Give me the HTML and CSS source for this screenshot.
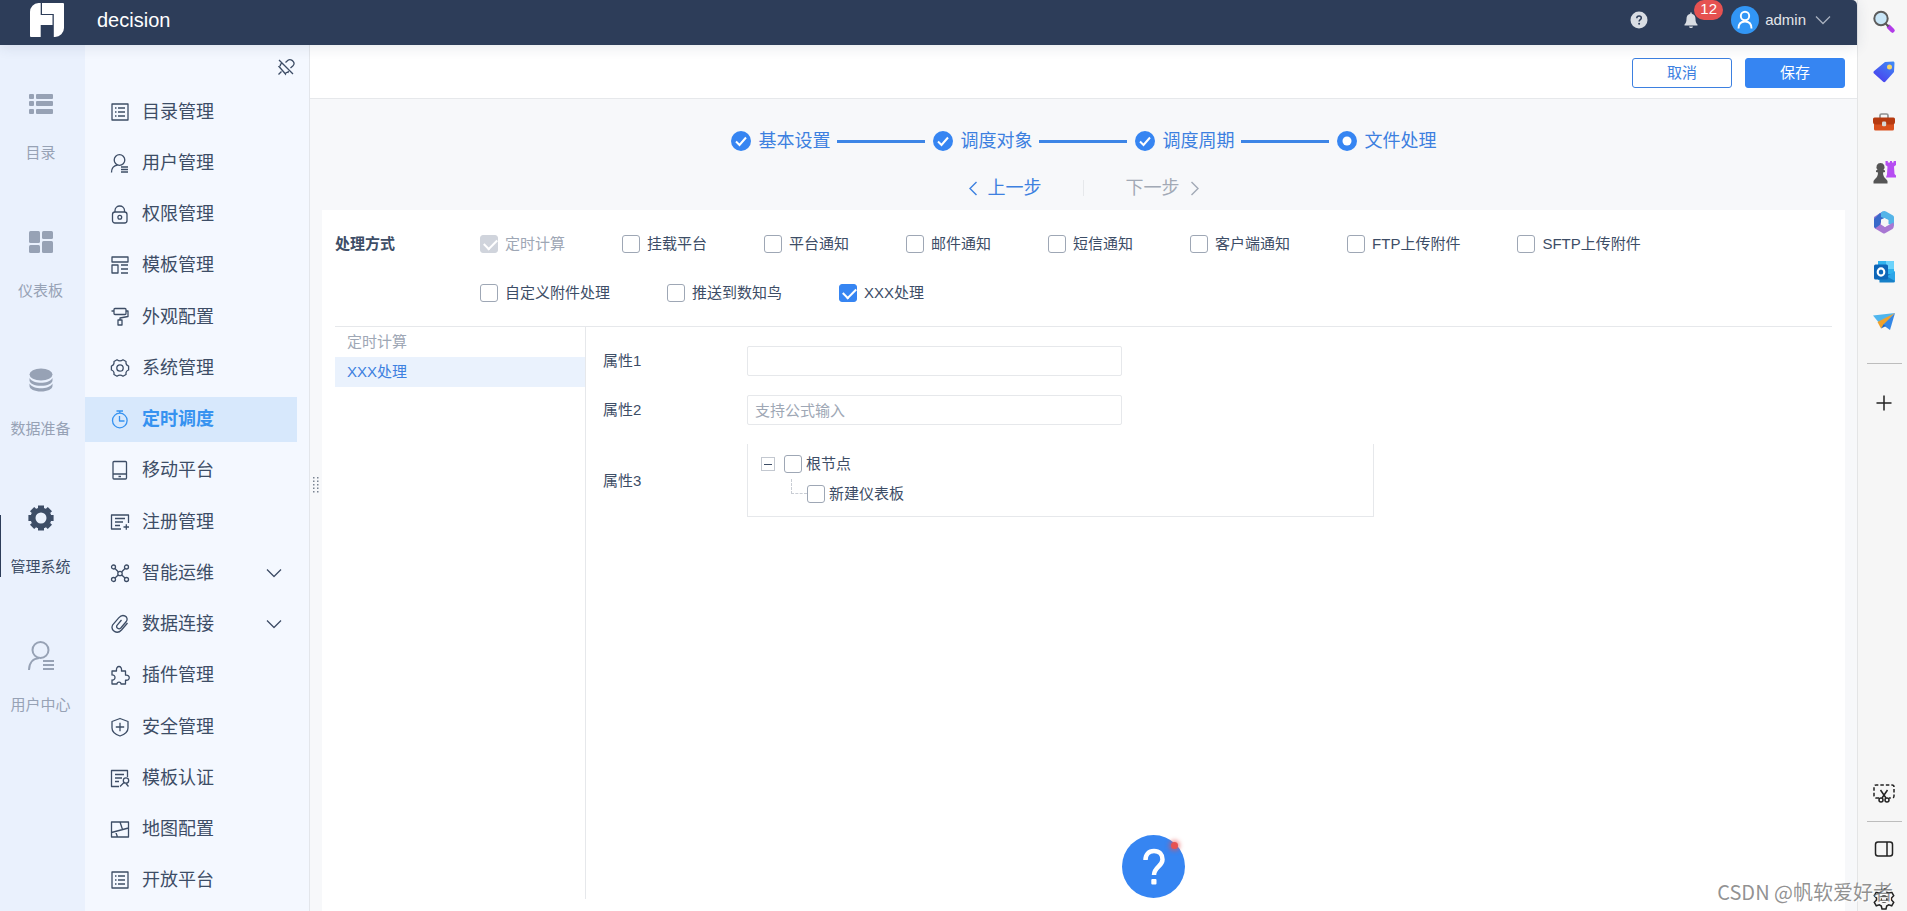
FILE: index.html
```html
<!DOCTYPE html>
<html lang="zh-CN">
<head>
<meta charset="utf-8">
<title>decision</title>
<link rel="stylesheet" href="styles.css">
</head>
<body>
<div class="app">
  <header class="topbar">
    <svg class="logo" viewBox="0 0 36 36"><path fill="#fff" d="M10.500 1H12.700V13H24.500V23H12.700V35H3a1 1 0 0 1-1-1V10a9 9 0 0 1 8.500-9z"/><path fill="#fff" d="M14 1h21a1 1 0 0 1 1 1v24a9 9 0 0 1-9 9h-1.200V12H14z"/></svg>
    <h1 class="brand">decision</h1>
    <div class="tools">
      <button class="tool" aria-label="帮助"><svg width="18" height="18" viewBox="0 0 18 18"><circle cx="9" cy="9" r="8.500" fill="#d9dde3"/><path d="M6.800 7.200c0-1.400 1-2.200 2.300-2.200s2.200.8 2.200 2c0 1.600-2.200 1.700-2.200 3.400" fill="none" stroke="#2d3d59" stroke-width="1.500"/><circle cx="9.100" cy="12.800" r="1" fill="#2d3d59"/></svg></button>
      <button class="tool bell" aria-label="消息"><svg width="16" height="18" viewBox="0 0 16 18"><path fill="#d9dde3" d="M7.300 1.500h1.400v1.300c2.600.5 3.800 2.500 3.800 5 0 3.200.6 4.400 2 5.700v1H1.500v-1c1.400-1.300 2-2.500 2-5.700 0-2.500 1.200-4.500 3.800-5zM6 15.500h4c-.2 1-1 1.500-2 1.500s-1.800-.5-2-1.500z"/></svg><span class="badge">12</span></button>
      <button class="user"><svg width="28" height="28" viewBox="0 0 28 28"><circle cx="14" cy="14" r="14" fill="#3296f5"/><g fill="none" stroke="#fff" stroke-width="1.900"><circle cx="14" cy="10" r="4.200"/><path d="M7.500 22.500c0-4.500 2.500-7 6.500-7s6.500 2.500 6.500 7"/></g></svg><span>admin</span><svg class="line" width="16" height="10" viewBox="0 0 16 10"><path d="M1 1.500l7 7 7-7"/></svg></button>
    </div>
  </header>
  <div class="workspace">
    <nav class="rail">
      <a class="rail-item" href="#"><svg viewBox="0 0 26 30" fill="#97a2b5"><rect x="1" y="5" width="5" height="5" rx="1"/><rect x="8" y="5" width="17" height="5" rx="1"/><rect x="1" y="12" width="5" height="5" rx="1"/><rect x="8" y="12" width="17" height="5" rx="1"/><rect x="1" y="20" width="5" height="5" rx="1"/><rect x="8" y="20" width="17" height="5" rx="1"/></svg><span>目录</span></a>
      <a class="rail-item" href="#"><svg viewBox="0 0 26 30" fill="#97a2b5"><rect x="1" y="4" width="11" height="12" rx="1.500"/><rect x="14" y="4" width="11" height="8" rx="1.500"/><rect x="1" y="18" width="11" height="8" rx="1.500"/><rect x="14" y="14" width="11" height="12" rx="1.500"/></svg><span>仪表板</span></a>
      <a class="rail-item" href="#"><svg viewBox="0 0 26 30" fill="#97a2b5"><ellipse cx="13" cy="9.500" rx="11.500" ry="6"/><path d="M1.500 13c2 3.500 7 4.700 11.500 4.700S22.500 16.500 24.500 13v2.500c0 3-5 5.300-11.500 5.300S1.500 18.500 1.500 15.500z"/><path d="M1.500 18.500c2 3.500 7 4.700 11.500 4.700s9.500-1.200 11.500-4.700v2.500c0 3-5 5.500-11.500 5.500S1.500 24 1.500 21z"/></svg><span>数据准备</span></a>
      <a class="rail-item current" href="#"><svg viewBox="0 0 26 30"><circle cx="13" cy="15" r="8" fill="none" stroke="#3d4d66" stroke-width="5"/><g stroke="#3d4d66" stroke-width="6"><path d="M13 2.400v3M13 24.600v3M.4 15h3M22.600 15h3M4.100 6.100l2.100 2.100M19.800 21.800l2.100 2.100M21.900 6.100l-2.100 2.100M6.200 21.800l-2.100 2.100"/></g></svg><span>管理系统</span></a>
      <a class="rail-item" href="#"><svg viewBox="0 0 26 30" fill="none" stroke="#97a2b5" stroke-width="2"><circle cx="12.500" cy="9" r="8"/><path d="M1 29c0-7 4-11.500 10-12M15 20h11M15 24h11M15 28h11"/></svg><span>用户中心</span></a>
    </nav>
    <aside class="side">
      <div class="side-head"><button class="tool line" aria-label="取消固定"><svg width="18" height="18" viewBox="0 0 18 18"><path d="M2 2l14 14M1.500 16.500l3-3M8.500 4.500l2.500-2.200c2-1.600 4.500.2 5.500 1.500 1 1.600.5 3-.5 4L13.500 10M5 5.500l-1.500.6c.3 1.200-.5 2.100-1.500 2.400l6.500 7.500c.3-1.300 1.200-2 2.500-1.500l.5-1.500"/></svg></button></div>
      <ul class="menu">
        <li><a href="#"><svg viewBox="0 0 20 20"><path d="M2 2h16v16H2zM8 6h7M8 10h7M8 14h7M5 6h1.500M5 10h1.500M5 14h1.500"/></svg>目录管理</a></li>
        <li><a href="#"><svg viewBox="0 0 20 20"><circle cx="9.500" cy="7" r="5.300"/><path d="M1.500 19.500c0-4.500 2.500-7 6-7.400M11 14h7M11 16.500h7M11 19h7"/></svg>用户管理</a></li>
        <li><a href="#"><svg viewBox="0 0 20 20"><rect x="2.500" y="8" width="14.500" height="11" rx="2.500"/><path d="M5 8V6.500c0-6 9.500-6 9.500 0V8"/><circle cx="9.800" cy="13.300" r="1.900"/></svg>权限管理</a></li>
        <li><a href="#"><svg viewBox="0 0 20 20"><path d="M2 2h16v5H2zM2 10h6v8H2zM11 10h7M11 14h7M11 18h7"/></svg>模板管理</a></li>
        <li><a href="#"><svg viewBox="0 0 20 20"><path d="M5 1.500h10q1 0 1 1v4q0 1-1 1H5q-1 0-1-1v-4q0-1 1-1zM4 4H1.500M16 4h2v5.500l-8 1.500v2M8 13h4v5H8z"/></svg>外观配置</a></li>
        <li><a href="#"><svg viewBox="0 0 20 20"><path d="M7 1.800Q10 4 13 1.800L16 3.500Q15.500 7 18.600 8V12Q15.500 13 16 16.500L13 18.200Q10 16 7 18.200L4 16.500Q4.500 13 1.400 12V8Q4.500 7 4 3.500Z"/><circle cx="10" cy="10" r="3.200"/></svg>系统管理</a></li>
        <li><a class="active" href="#"><svg viewBox="0 0 20 20"><circle cx="9.800" cy="11.500" r="7.300"/><path d="M9.500 7v5h5M6.500 2h6.500M9.800 2v2"/></svg>定时调度</a></li>
        <li><a href="#"><svg viewBox="0 0 20 20"><rect x="3" y="1.500" width="13.500" height="17.500" rx="1"/><path d="M3 14h13.500M8.500 16.500h2.500"/></svg>移动平台</a></li>
        <li><a href="#"><svg viewBox="0 0 20 20"><path d="M18.500 11V3h-17v14H11M5 6.500h10M5 10h8M5 13.500h5M13.500 15H19M16.300 12.200v5.600"/></svg>注册管理</a></li>
        <li><a href="#"><svg viewBox="0 0 20 20"><circle cx="3.500" cy="4" r="2"/><circle cx="16.500" cy="4" r="2"/><circle cx="3.500" cy="16.500" r="2"/><circle cx="16.500" cy="16.500" r="2"/><circle cx="10" cy="10.500" r="2.200"/><path d="M5 5.500l3.200 3.300M15 5.500l-3.200 3.300M5 15l3.200-3M15 15l-3.200-3"/></svg>智能运维<svg class="chev" viewBox="0 0 16 10"><path d="M1 1.500l7 7 7-7"/></svg></a></li>
        <li><a href="#"><svg viewBox="0 0 20 20"><path d="M17.500 9l-6 7c-4.500 5-11.500.5-8.800-5.200l6-7C13-1 19.300 3 16.300 7.500l-5.500 6.500c-2 2-5.100-.2-3.800-2.700l4.500-5.300"/></svg>数据连接<svg class="chev" viewBox="0 0 16 10"><path d="M1 1.500l7 7 7-7"/></svg></a></li>
        <li><a href="#"><svg viewBox="0 0 20 20"><path d="M2 6h4.500c-1-6 6-6 5 0h4v4.200c5-.8 5 5.800 0 5V19H11c0-2.500-4-2.500-4 0H2v-4c4 .5 4-5.500 0-5z"/></svg>插件管理</a></li>
        <li><a href="#"><svg viewBox="0 0 20 20"><path d="M10 1.500l8 3V11c0 4-3.500 6.500-8 8-4.500-1.500-8-4-8-8V4.500zM5.800 10h8.400M10 5.800v8.400"/></svg>安全管理</a></li>
        <li><a href="#"><svg viewBox="0 0 20 20"><path d="M17.500 9V2.500h-16v16H9M5 6.500h9M5 10h7M5 13.500h4"/><circle cx="16" cy="12.500" r="2.700"/><path d="M14 14.500L10 18.500M16 15.500l2.500 3"/></svg>模板认证</a></li>
        <li><a href="#"><svg viewBox="0 0 20 20"><path d="M1.500 3h17v15h-17zM1.500 13.500l17-4.500M10 3l2.500 7.500M5.500 12.500l2 5.500"/></svg>地图配置</a></li>
        <li><a href="#"><svg viewBox="0 0 20 20"><path d="M2 2h16v16H2zM8 6h7M8 10h7M8 14h7M5 6h1.500M5 10h1.500M5 14h1.500"/></svg>开放平台</a></li>
      </ul>
    </aside>
    <main class="main">
      <svg class="grip" width="7" height="17" viewBox="0 0 7 17" fill="#7b8492"><path d="M1 1h1.500v1.500H1zM5 1h1.500v1.500H5zM1 4.500h1.500V6H1zM5 4.500h1.500V6H5zM1 8h1.500v1.500H1zM5 8h1.500v1.500H5zM1 11.500h1.500V13H1zM5 11.500h1.500V13H5zM1 15h1.500v1.500H1zM5 15h1.500v1.500H5z"/></svg>
      <div class="actions"><button class="btn">取消</button><button class="btn primary">保存</button></div>
      <ol class="steps">
        <li><svg viewBox="0 0 20 20"><circle cx="10" cy="10" r="10"/><path d="M5 10.500l3.500 3.500L15 6.500"/></svg>基本设置</li>
        <li><svg viewBox="0 0 20 20"><circle cx="10" cy="10" r="10"/><path d="M5 10.500l3.500 3.500L15 6.500"/></svg>调度对象</li>
        <li><svg viewBox="0 0 20 20"><circle cx="10" cy="10" r="10"/><path d="M5 10.500l3.500 3.500L15 6.500"/></svg>调度周期</li>
        <li><svg viewBox="0 0 20 20"><circle cx="10" cy="10" r="10"/><circle class="hole" cx="10" cy="10" r="4.500"/></svg>文件处理</li>
      </ol>
      <div class="pager">
        <button class="page prev"><svg width="10" height="15" viewBox="0 0 10 15"><path d="M8.500 1L2 7.500 8.500 14"/></svg>上一步</button>
        <button class="page next" disabled>下一步<svg width="10" height="15" viewBox="0 0 10 15"><path d="M1.500 1L8 7.500 1.500 14"/></svg></button>
      </div>
      <section class="card">
        <fieldset class="methods">
          <legend>处理方式</legend>
          <div class="options">
            <label><input type="checkbox" checked disabled>定时计算</label>
            <label><input type="checkbox">挂载平台</label>
            <label><input type="checkbox">平台通知</label>
            <label><input type="checkbox">邮件通知</label>
            <label><input type="checkbox">短信通知</label>
            <label><input type="checkbox">客户端通知</label>
            <label><input type="checkbox">FTP上传附件</label>
            <label><input type="checkbox">SFTP上传附件</label>
            <label><input type="checkbox">自定义附件处理</label>
            <label><input type="checkbox">推送到数知鸟</label>
            <label><input type="checkbox" checked>XXX处理</label>
          </div>
        </fieldset>
        <div class="detail">
          <div class="tabs">
            <button class="tab" disabled>定时计算</button>
            <button class="tab selected">XXX处理</button>
          </div>
          <form class="form">
            <label for="p1">属性1</label><input class="field" id="p1" type="text">
            <label for="p2">属性2</label><input class="field" id="p2" type="text" placeholder="支持公式输入">
            <span id="p3">属性3</span>
            <div class="tree" role="group" aria-labelledby="p3">
              <div class="node"><button type="button" class="toggle" aria-label="收起"></button><label><input type="checkbox">根节点</label></div>
              <div class="node child"><span class="branch"></span><label><input type="checkbox">新建仪表板</label></div>
            </div>
          </form>
        </div>
      </section>
    </main>
  </div>
  <button class="help" aria-label="帮助中心"><svg viewBox="0 0 63 63"><circle cx="31.500" cy="31.500" r="31.500" fill="#3685f2"/><path d="M23.500 25c0-5.500 3-9 8.500-9s8.500 3.500 8.500 8.500c0 7-8.500 7.500-8.500 15.500" fill="none" stroke="#fff" stroke-width="4.500"/><rect x="29.300" y="44" width="5.200" height="5.500" rx="1" fill="#fff"/></svg></button>
</div>
<aside class="dock">
  <svg viewBox="0 0 24 24"><path d="M17 17l3.500 3.500" stroke="#b23be8" stroke-width="4.500" stroke-linecap="round"/><path d="M13.500 13.500l3 3" stroke="#555" stroke-width="2"/><circle cx="9" cy="8.500" r="6.700" fill="#c8e6f8" stroke="#5c5c5c" stroke-width="2"/></svg>
  <svg viewBox="0 0 24 24"><defs><linearGradient id="tag" x1="1" y1="0" x2=".3" y2="1"><stop offset="0" stop-color="#3f8df5"/><stop offset="1" stop-color="#4a41ee"/></linearGradient></defs><path fill="url(#tag)" d="M13 2l8-.5c1 0 1.500.6 1.500 1.500l-.5 9-8.500 9.500c-.8.9-1.800.9-2.600.1L2 13.500c-.8-.8-.7-1.700.1-2.500z"/><circle cx="17.500" cy="7" r="2.500" fill="#f4d66a"/></svg>
  <svg viewBox="0 0 24 24"><path d="M8 8V5.500Q8 4 9.500 4h5Q16 4 16 5.500V8" fill="none" stroke="#8f8f8f" stroke-width="1.700"/><path fill="#d9501e" d="M2 14h20v5q0 1.500-1.500 1.500h-17Q2 20.500 2 19z"/><path fill="#b63a10" d="M2.500 7.500h19q1.500 0 1.500 1.500v3q0 2.500-3 2.500H4q-3 0-3-2.500V9q0-1.500 1.500-1.500z"/><rect x="10" y="11.500" width="4.200" height="4.800" rx="1.300" fill="#d7d7d7"/></svg>
  <svg viewBox="0 0 24 24"><path fill="#b64df2" d="M13.500 1h2.300v1.500H18V1h2v1.500h1.600V1H24v4l-2 1.500.5 7.500 1.500 1.500V17.500H14l1-3 .5-8-2-1.500z"/><path fill="#555" d="M8.500 3a4 4 0 0 1 3 6.700l1.500.8v1.500l-2 .6c0 3 1 5 3 6.400l1.500 2V23.500h-14V21L3 19c2-1.500 3-3.500 3-6.400L4 12v-1.500l1.500-.8A4 4 0 0 1 8.500 3z"/></svg>
  <svg viewBox="0 0 24 24"><path fill="#8f78d6" d="M2 7l8.500-5.500V11L8.500 15l-5 4Q2 18 2 16z"/><path fill="#3869c9" d="M8 3l4 3v4l-4 3v4l-3 2-3-2V9z"/><path fill="#54b4e8" d="M9 2.500Q12 .2 14 1.500l7 4q1 .7 1 2v8.500l-5.500-2V10L9 7z"/><path fill="#a877d3" d="M3 18.500l6-4.500 4 3 8.500-4.500q1 5-1 6.500L13 23.200q-1 .5-2 0z"/><path fill="#f6f6f6" d="M9 9.500L12.500 8 16 10v4.500L13 17l-4-2.500z"/></svg>
  <svg viewBox="0 0 24 24"><path fill="#31b3ee" d="M6 1h15q1 0 1 1v18H6z"/><path fill="#6cd3fb" d="M14 1h7q1 0 1 1v7h-8z"/><path fill="#1680c8" d="M7 14h16v7q0 1.500-1.500 1.500h-14z"/><path fill="#2da5e8" d="M15 16.500l8-5.500v10z"/><rect x="2" y="4.500" width="14" height="15" rx="1.500" fill="#0e66b8"/><ellipse cx="9" cy="12" rx="3.300" ry="3.600" fill="none" stroke="#fff" stroke-width="2.100"/></svg>
  <svg viewBox="0 0 24 24"><path fill="#50b6ee" d="M1 5.500L23 3 8 14z"/><path fill="#f0a22d" d="M5.500 12L23 3 9 18.500z"/><path fill="#3487e6" d="M23 3l-5 17-7-5z"/><path fill="#1b65c4" d="M9 18.500l2.500-4L14 16z"/></svg>
  <hr>
  <svg class="mono" viewBox="0 0 24 24"><path d="M12 4.500v15M4.500 12h15"/></svg>
  <svg class="mono bottom" viewBox="0 0 24 24"><path stroke-dasharray="3.500 2" d="M7 17H4q-2 0-2-2V6q0-2 2-2h16q2 0 2 2v9q0 2-2 2h-3"/><path d="M8.500 9l5.500 8M15.500 9L10 17"/><circle cx="9" cy="19" r="2"/><circle cx="15" cy="19" r="2"/></svg>
  <hr>
  <svg class="mono" viewBox="0 0 24 24"><rect x="3.500" y="5" width="17" height="14" rx="2.500"/><path d="M15 5v14"/></svg>
  <svg class="mono" viewBox="0 0 24 24"><path d="M10 2h4l.7 3 2 1.100 3-.9 2 3.500L19.500 11v2l2.200 2.300-2 3.500-3-.9-2 1.100L14 22h-4l-.7-3-2-1.100-3 .9-2-3.500L4.500 13v-2L2.300 8.700l2-3.500 3 .9 2-1.100z"/><circle cx="12" cy="12" r="3"/></svg>
</aside>
<div class="watermark">CSDN @帆软爱好者</div>
</body>
</html>
```

FILE: styles.css
```css
* { box-sizing: border-box; }
body { margin: 0; display: flex; height: 100vh; overflow: hidden; background: #f6f6f6; color: #3d4d66; font: 15px/20px "Liberation Sans", "Noto Sans CJK SC", sans-serif; }
button, input { font: inherit; color: inherit; }
button { border: 0; padding: 0; background: none; }
a { color: inherit; text-decoration: none; }
ul, ol { list-style: none; margin: 0; padding: 0; }
svg { flex: none; display: block; }

.app { flex: 1; min-width: 0; display: flex; flex-direction: column; position: relative; }
.topbar { height: 45px; flex: none; display: flex; align-items: center; background: #2d3d59; color: #e3e6ea; border-top-right-radius: 5px; padding: 0 26px 5px 28px; box-shadow: 0 2px 14px rgba(45, 61, 89, 0.12); position: relative; z-index: 1; }
.logo { width: 36px; height: 36px; }
.brand { margin: 0 0 0 33px; font-size: 20px; font-weight: 400; color: #fff; }
.tools { margin-left: auto; display: flex; align-items: center; }
.tool { display: block; }
.bell { margin-left: 35px; position: relative; }
.badge { position: absolute; left: 11px; top: -11px; width: 29px; height: 20px; border-radius: 10px; background: #e65251; color: #fff; line-height: 18px; text-align: center; }
.user { display: flex; align-items: center; margin-left: 32px; gap: 6px; }
.user .line { margin-left: 3px; color: #a9b1bf; }
.line path { fill: none; stroke: currentColor; stroke-width: 1.3; }

.workspace { flex: 1; min-height: 0; display: flex; }
.rail { width: 85px; flex: none; background: #eaf1fd; padding-top: 44px; display: flex; flex-direction: column; gap: 64px; }
.rail-item { display: flex; flex-direction: column; align-items: center; gap: 24px; color: #97a2b5; height: 74px; padding-right: 4px; }
.rail-item svg { width: 26px; height: 30px; }
.current { color: #3d4d66; background: linear-gradient(#2d3d59, #2d3d59) 0 12px / 1px 62px no-repeat; }

.side { width: 225px; flex: none; background: #f4f8ff; border-right: 1px solid #e3e6eb; display: flex; flex-direction: column; padding-bottom: 8px; }
.side-head { height: 44px; flex: none; display: flex; align-items: flex-start; justify-content: flex-end; padding: 13px 14px 0 0; }
.menu { flex: 1; display: flex; flex-direction: column; justify-content: space-between; padding-right: 12px; }
.menu a { display: flex; align-items: center; height: 45px; padding: 0 15px 0 25px; gap: 12px; font-size: 18px; }
.menu svg { width: 20px; height: 20px; fill: none; stroke: currentColor; stroke-width: 1.3; stroke-linejoin: round; }
.menu .chev { width: 16px; height: 10px; margin-left: auto; }
.menu .active { background: #d7e8fc; color: #3692f0; font-weight: 700; }

.main { flex: 1; min-width: 0; display: flex; flex-direction: column; background: #f7f8fa; position: relative; }
.grip { position: absolute; left: 2px; top: 431px; }
.actions { height: 54px; flex: none; background: #fff; border-bottom: 1px solid #e6e8eb; display: flex; justify-content: flex-end; gap: 13px; padding: 13px 12px 0; }
.btn { width: 100px; height: 30px; border: 1px solid #3d80e0; border-radius: 3px; background: #fff; color: #3d80e0; }
.primary { background: #3685f2; border-color: #3685f2; color: #fff; }
.steps { display: flex; justify-content: center; padding-top: 30px; color: #3d80e0; font-size: 18px; line-height: 24px; }
.steps li { display: flex; align-items: center; gap: 8px; }
.steps li:not(:last-child)::after { content: ""; width: 88px; height: 3px; background: #3d85e6; margin: 0 8px 0 -2px; }
.steps svg { width: 20px; height: 20px; fill: #3685f2; }
.steps path { fill: none; stroke: #fff; stroke-width: 2; }
.steps .hole { fill: #fff; }
.pager { display: flex; justify-content: center; padding: 23px 0 10px; }
.page { display: flex; align-items: center; gap: 10px; width: 116px; height: 24px; font-size: 18px; color: #3d80e0; }
.page svg { fill: none; stroke: currentColor; stroke-width: 1.4; }
.prev { border-right: 1px solid #e6e8eb; height: 16px; margin: 4px 0; }
.next { color: #a2a9b5; justify-content: flex-end; }

.card { flex: 1; min-height: 0; margin: 0 12px; padding: 0 13px 12px; background: #fff; display: flex; flex-direction: column; }
.methods { border: 0; margin: 0; padding: 24px 0 23px; display: flex; min-width: 0; border-bottom: 1px solid #e6e8eb; }
.methods legend { float: left; width: 145px; padding: 0; font-weight: 700; }
.options { flex: 1; display: flex; flex-wrap: wrap; row-gap: 29px; }
.options label { margin-right: 57px; }
label { display: flex; align-items: center; gap: 7px; }
input[type="checkbox"] { appearance: none; width: 18px; height: 18px; margin: 0; flex: none; border: 1px solid #9ea7b5; border-radius: 3px; background: #fff; position: relative; }
input[type="checkbox"]:checked { background: #3685f2; border-color: #3685f2; }
input[type="checkbox"]:checked::after { content: ""; position: absolute; left: 3px; top: 3px; width: 11px; height: 6px; border: solid #fff; border-width: 0 0 2px 2px; transform: rotate(-45deg); }
input[type="checkbox"]:disabled { background: #d0d4dc; border-color: #d0d4dc; }
label:has(:disabled) { color: #9ea7b5; }

.detail { flex: 1; display: flex; }
.tabs { width: 251px; border-right: 1px solid #e6e8eb; }
.tab { display: block; width: 100%; height: 30px; padding: 0 12px; text-align: left; }
.tab:disabled { color: #9ea7b5; }
.selected { background: #eaf2fd; color: #3d80e0; }
.form { flex: 1; display: grid; grid-template-columns: 144px 1fr; gap: 19px 0; align-content: start; align-items: center; padding: 19px 0 0 17px; }
.field { width: 375px; height: 30px; border: 1px solid #e6e8eb; border-radius: 2px; padding: 0 7px; background: #fff; }
.field::placeholder { color: #9ea7b5; opacity: 1; }
.tree { width: 627px; height: 73px; border: 1px solid #e6e8eb; border-top: 0; padding: 5px 13px; }
.node { display: flex; align-items: center; height: 30px; gap: 9px; }
.node label { gap: 4px; }
.toggle { width: 14px; height: 14px; border: 1px solid #c3c8d0; background: linear-gradient(#3d4d66, #3d4d66) center / 8px 1px no-repeat; }
.child { gap: 0; padding-left: 30px; align-items: flex-start; }
.child label { height: 30px; }
.branch { width: 16px; height: 15px; border: dashed #c9cdd4; border-width: 0 0 1px 1px; }

.help { position: absolute; left: 1122px; bottom: 13px; width: 63px; height: 63px; }
.help::after { content: ""; position: absolute; right: 7px; top: 7px; width: 7px; height: 7px; border-radius: 4px; background: #e65251; box-shadow: 0 0 4px 2px rgba(230, 82, 81, 0.6); }

.dock { width: 50px; flex: none; border-left: 1px solid #e4e5e6; background: #f6f6f6; display: flex; flex-direction: column; align-items: center; gap: 26px; padding: 10px 0 0 3px; }
.dock svg { width: 24px; height: 24px; }
.dock hr { width: 35px; height: 1px; border: 0; background: #bdbdbd; margin: 3px 0 1px; }
.dock .mono { fill: none; stroke: #222; stroke-width: 1.5; }
.dock .bottom { margin-top: auto; }
.dock .bottom + hr { margin: -10px 0 -11px; }
.watermark { position: absolute; right: 14px; bottom: 6px; font: 20px/26px "Noto Sans CJK SC", sans-serif; color: rgba(110, 110, 110, 0.75); text-shadow: 1px 1px 0 #fff; }
```
